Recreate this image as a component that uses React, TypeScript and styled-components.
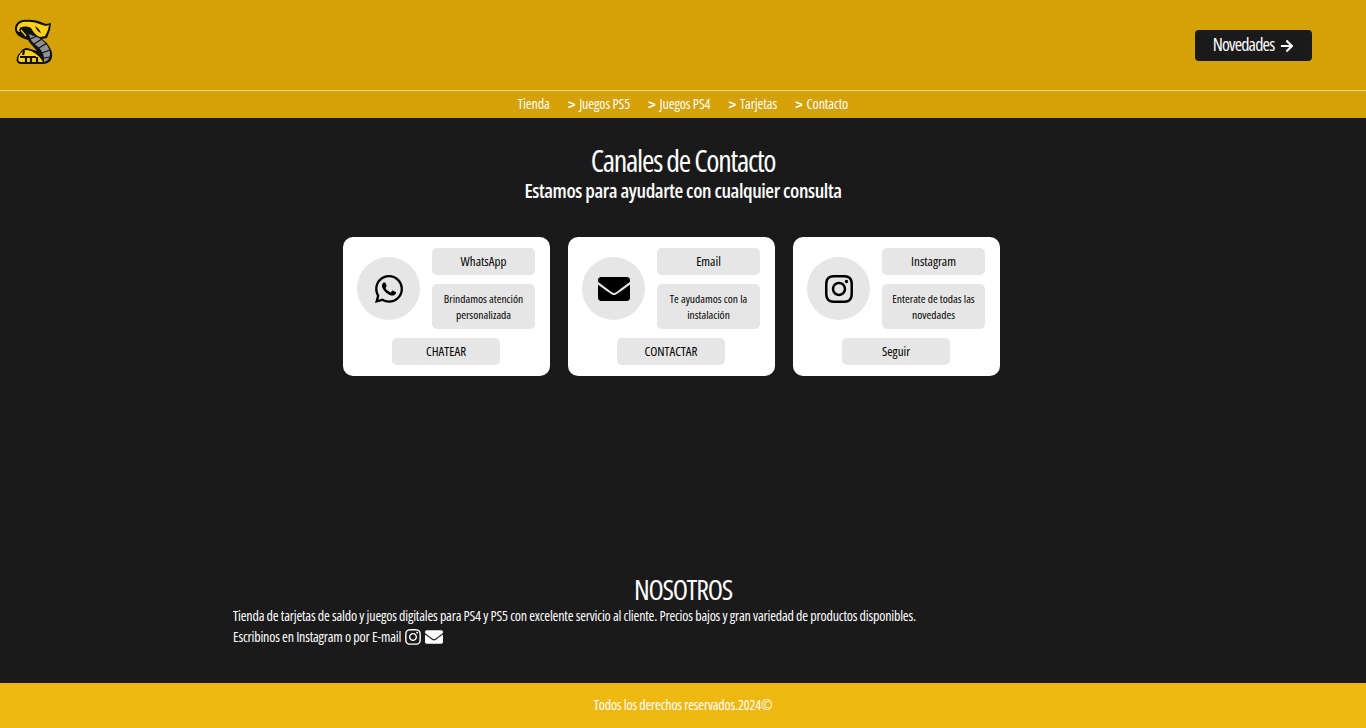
import { createGlobalStyle, styled } from 'styled-components';
import { FaArrowRight, FaEnvelope, FaInstagram, FaWhatsapp } from 'react-icons/fa';

const GlobalStyle = createGlobalStyle`
  html, body {
    margin: 0;
    padding: 0;
    background: #1a1a1a;
  }
  body {
    font-family: "Open Sans", "Liberation Sans", sans-serif;
    font-stretch: 75%;
  }
  * {
    box-sizing: border-box;
  }
`;

const Page = styled.div`
  min-height: 728px;
  display: flex;
  flex-direction: column;
`;

const TopBar = styled.header`
  height: 91px;
  background: #d4a106;
  border-bottom: 1px solid #e9d48a;
  display: flex;
  align-items: flex-start;
  justify-content: space-between;
  padding: 19px 54px 0 15px;
`;

const NewsButton = styled.button`
  width: 117px;
  height: 31px;
  margin-top: 11px;
  padding: 0 0 3px;
  border: 0;
  border-radius: 4px;
  background: #1a1a1a;
  color: #fff;
  font: inherit;
  font-size: 18px;
  letter-spacing: -0.85px;
  display: flex;
  align-items: center;
  justify-content: center;
  gap: 6px;
  svg {
    margin-top: 3px;
  }
`;

const Breadcrumbs = styled.nav`
  height: 27px;
  padding-bottom: 2px;
  background: #d4a106;
  display: flex;
  align-items: center;
  justify-content: center;
  gap: 18px;
  color: #fff;
  font-size: 14px;
  letter-spacing: -0.1px;
`;

const Crumb = styled.span`
  white-space: nowrap;
  b {
    font-family: "Liberation Sans", sans-serif;
    font-size: 13px;
    margin-right: 4px;
  }
`;

const Main = styled.main`
  flex: 1;
  display: flex;
  flex-direction: column;
  align-items: center;
  padding-top: 26px;
  color: #fff;
`;

const Title = styled.h1`
  margin: 0;
  font-size: 30px;
  font-weight: 400;
  line-height: 34px;
  letter-spacing: -1.25px;
`;

const Subtitle = styled.h2`
  margin: 1px 0 0;
  font-size: 20px;
  font-weight: 600;
  line-height: 24px;
  letter-spacing: -0.4px;
`;

const Cards = styled.div`
  display: flex;
  gap: 18px;
  margin: 34px 23px 0 0;
`;

const Card = styled.article`
  width: 207px;
  height: 139px;
  padding: 11px 15px 11px 14px;
  background: #fff;
  border-radius: 10px;
  color: #000;
  display: flex;
  flex-direction: column;
  align-items: center;
  gap: 9px;
`;

const CardTop = styled.div`
  width: 100%;
  display: grid;
  grid-template-columns: 63px 103px;
  justify-content: space-between;
  align-items: center;
`;

const IconCircle = styled.div`
  width: 63px;
  height: 63px;
  border-radius: 50%;
  background: #e6e6e6;
  display: flex;
  align-items: center;
  justify-content: center;
  font-size: 32px;
`;

const CardText = styled.div`
  display: flex;
  flex-direction: column;
  gap: 9px;
`;

const Pill = styled.div<{ $small?: boolean }>`
  min-height: ${({ $small }) => ($small ? '45px' : '27px')};
  padding: ${({ $small }) => ($small ? '0 6px' : '0 6px 2px')};
  border-radius: 5px;
  background: #e6e6e6;
  display: flex;
  align-items: center;
  justify-content: center;
  text-align: center;
  font-size: ${({ $small }) => ($small ? '11.5px' : '13px')};
  line-height: 16px;
`;

const CardButton = styled.button`
  width: 108px;
  height: 27px;
  padding: 0 0 2px;
  border: 0;
  border-radius: 5px;
  background: #e6e6e6;
  color: #000;
  font: inherit;
  font-size: 13px;
`;

const About = styled.section`
  width: 900px;
  margin-top: 197px;
`;

const AboutTitle = styled.h2`
  margin: 0;
  text-align: center;
  font-size: 28px;
  font-weight: 400;
  line-height: 32px;
  letter-spacing: -1.2px;
`;

const AboutLine = styled.p`
  margin: 0;
  font-size: 14px;
  line-height: 21px;
  white-space: nowrap;
  display: flex;
  align-items: center;
  gap: 3px;
  letter-spacing: -0.2px;
`;

const Footer = styled.footer`
  height: 45px;
  padding-bottom: 3px;
  background: #efb810;
  color: #fff;
  font-size: 14px;
  letter-spacing: -0.2px;
  display: flex;
  align-items: center;
  justify-content: center;
`;

function SnakeLogo() {
  return (
    <svg width="38" height="46" viewBox="0 0 38 46" aria-hidden="true">
      <path d="M0 10 C0 4 5 0 12 1 C20 0 28 4 31 5 L36 4 L35 11 L32 19 L27 20 C31 23 36 28 37 34 C38 41 34 45 28 45 L5 45 C0 44 1 37 5 34 C7 30 10 29 12 29 L22 32 C19 28 15 25 13 21 C6 19 0 16 0 10 Z" fill="#111" />
      <path d="M14 15 L24 19 C30 23 35 28 35 35 C35 39 33 42 29 43 C30 36 26 30 22 27 C18 24 15 21 14 15 Z" fill="#8f8f96" />
      <path d="M15 20 L22 17 M19 25 L27 20 M24 29 L32 24 M27 34 L35 31 M29 39 L35 38" stroke="#111" strokeWidth="1.2" />
      <path d="M4 37 C6 33 9 31 12 31 C18 32 24 36 28 43 L6 43 C3 43 3 40 4 37 Z" fill="#ffd21a" />
      <path d="M9 32 L8 36 M5 38 L21 38 M11 38 L11 43 M16 38 L16 43 M22 38 L22 43" stroke="#111" strokeWidth="2.2" />
      <path d="M2 10 C2 5 7 2 12 3 C18 2 26 6 31 7 L34 6 L33 11 L30 17 L25 18 C20 16 18 12 16 9 C13 7 7 7 5 9 C4 10 4 12 5 13 C3 13 2 12 2 10 Z" fill="#ffd21a" />
      <path d="M20 7 C23 9 25 11 26 14 C23 13 21 10 20 7 Z" fill="#111" />
      <path d="M6 11 L11 17" stroke="#ffd21a" strokeWidth="1.2" />
    </svg>
  );
}

const channels = [
  { icon: <FaWhatsapp />, name: 'WhatsApp', text: 'Brindamos atención personalizada', action: 'CHATEAR' },
  { icon: <FaEnvelope />, name: 'Email', text: 'Te ayudamos con la instalación', action: 'CONTACTAR' },
  { icon: <FaInstagram />, name: 'Instagram', text: 'Enterate de todas las novedades', action: 'Seguir' },
];

export default function App() {
  return (
    <Page>
      <GlobalStyle />
      <TopBar>
        <SnakeLogo />
        <NewsButton>
          Novedades <FaArrowRight size={14} />
        </NewsButton>
      </TopBar>
      <Breadcrumbs>
        <Crumb>Tienda</Crumb>
        {['Juegos PS5', 'Juegos PS4', 'Tarjetas', 'Contacto'].map((item) => (
          <Crumb key={item}>
            <b>&gt;</b>
            {item}
          </Crumb>
        ))}
      </Breadcrumbs>
      <Main>
        <Title>Canales de Contacto</Title>
        <Subtitle>Estamos para ayudarte con cualquier consulta</Subtitle>
        <Cards>
          {channels.map((c) => (
            <Card key={c.name}>
              <CardTop>
                <IconCircle>{c.icon}</IconCircle>
                <CardText>
                  <Pill>{c.name}</Pill>
                  <Pill $small>{c.text}</Pill>
                </CardText>
              </CardTop>
              <CardButton>{c.action}</CardButton>
            </Card>
          ))}
        </Cards>
        <About>
          <AboutTitle>NOSOTROS</AboutTitle>
          <AboutLine>
            Tienda de tarjetas de saldo y juegos digitales para PS4 y PS5 con excelente servicio al cliente. Precios bajos y gran variedad de productos disponibles.
          </AboutLine>
          <AboutLine>
            Escribinos en Instagram o por E-mail <FaInstagram size={18} /> <FaEnvelope size={18} />
          </AboutLine>
        </About>
      </Main>
      <Footer>Todos los derechos reservados.2024©</Footer>
    </Page>
  );
}
